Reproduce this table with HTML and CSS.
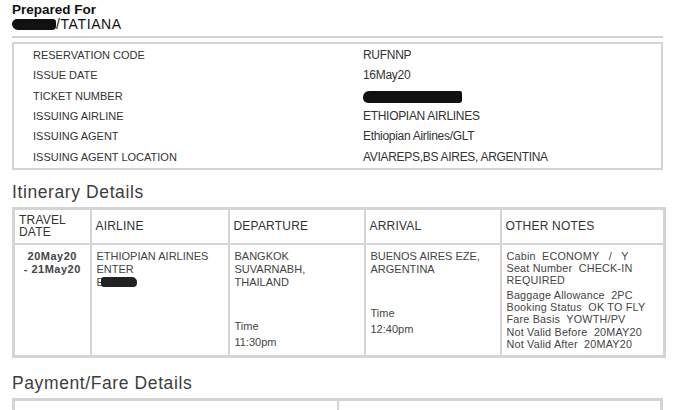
FILE: index.html
```html
<!DOCTYPE html>
<html>
<head>
<meta charset="utf-8">
<link rel="stylesheet" href="styles.css">
</head>
<body>
<div class="page">
  <div class="prepared">
    <div class="prep-title">Prepared For</div>
    <div class="prep-name"><span class="redact redact-name"></span>/TATIANA</div>
  </div>
  <div class="rule"></div>

  <div class="info">
    <div class="info-row"><span class="info-label">RESERVATION CODE</span><span class="info-value">RUFNNP</span></div>
    <div class="info-row"><span class="info-label">ISSUE DATE</span><span class="info-value">16May20</span></div>
    <div class="info-row"><span class="info-label">TICKET NUMBER</span><span class="info-value"><span class="redact redact-ticket"></span></span></div>
    <div class="info-row"><span class="info-label">ISSUING AIRLINE</span><span class="info-value">ETHIOPIAN AIRLINES</span></div>
    <div class="info-row"><span class="info-label">ISSUING AGENT</span><span class="info-value">Ethiopian Airlines/GLT</span></div>
    <div class="info-row"><span class="info-label">ISSUING AGENT LOCATION</span><span class="info-value">AVIAREPS,BS AIRES, ARGENTINA</span></div>
  </div>

  <h2 class="section">Itinerary Details</h2>
  <table class="itin">
    <colgroup>
      <col class="c1"><col class="c2"><col class="c3"><col class="c4"><col class="c5">
    </colgroup>
    <thead>
      <tr>
        <th>TRAVEL<br>DATE</th>
        <th>AIRLINE</th>
        <th>DEPARTURE</th>
        <th>ARRIVAL</th>
        <th>OTHER NOTES</th>
      </tr>
    </thead>
    <tbody>
      <tr>
        <td class="date">20May20<br>- 21May20</td>
        <td>ETHIOPIAN AIRLINES<br>ENTER<br><span class="e-red">E<span class="redact redact-air"></span></span></td>
        <td>BANGKOK<br>SUVARNABH,<br>THAILAND<div class="time-lbl">Time</div><div class="time-val">11:30pm</div></td>
        <td>BUENOS AIRES EZE,<br>ARGENTINA<div class="time-lbl">Time</div><div class="time-val">12:40pm</div></td>
        <td class="notes"><div>Cabin  ECONOMY   /   Y</div><div>Seat Number  CHECK-IN REQUIRED</div><div class="gap">Baggage Allowance  2PC</div><div>Booking Status  OK TO FLY</div><div>Fare Basis  YOWTH/PV</div><div>Not Valid Before  20MAY20</div><div>Not Valid After  20MAY20</div></td>
      </tr>
    </tbody>
  </table>

  <h2 class="section pay">Payment/Fare Details</h2>
  <table class="pay-table">
    <tr><td></td><td></td></tr>
  </table>
</div>
</body>
</html>
```

FILE: styles.css
```css
html, body {
  margin: 0;
  padding: 0;
  background: #ffffff;
}

body {
  font-family: "Liberation Sans", Arial, sans-serif;
  color: #333333;
}

.page {
  width: 651px;
  margin-left: 12px;
  padding-top: 2px;
}

.prep-title {
  font-weight: bold;
  font-size: 13.5px;
  line-height: 15px;
  color: #111111;
}

.prep-name {
  font-size: 14px;
  line-height: 15px;
  color: #111111;
  letter-spacing: 0.6px;
  display: flex;
  align-items: center;
}

.redact {
  display: inline-block;
  background: #111111;
  filter: blur(0.7px);
}

.redact-name {
  width: 44px;
  height: 11px;
  border-radius: 5px 3px 4px 6px;
}

.rule {
  margin-top: 4px;
  height: 2px;
  background: #d2d2d2;
}

.info {
  margin-top: 4px;
  border: 2px solid #d4d4d4;
  padding: 1px 0 1px 0;
}

.info-row {
  display: flex;
  height: 20.3px;
  align-items: center;
}

.info-label {
  width: 330px;
  padding-left: 19px;
  font-size: 11px;
  color: #333333;
}

.info-value {
  font-size: 12px;
  letter-spacing: -0.3px;
  color: #333333;
}

.redact-ticket {
  width: 99px;
  height: 12px;
  border-radius: 6px 2px 3px 5px;
  vertical-align: middle;
}

.section {
  margin: 12px 0 5px 0;
  font-size: 17.5px;
  font-weight: normal;
  letter-spacing: 0.6px;
  line-height: 20px;
  color: #3d3d3d;
}

.itin {
  width: 651px;
  border-collapse: collapse;
  table-layout: fixed;
  border: 3px solid #d4d4d4;
}

.c1 { width: 77px; }
.c2 { width: 138px; }
.c3 { width: 136px; }
.c4 { width: 136px; }
.c5 { width: 164px; }

.itin th {
  border: 2px solid #d4d4d4;
  text-align: left;
  font-weight: normal;
  font-size: 12px;
  line-height: 12.5px;
  letter-spacing: 0.2px;
  color: #333333;
  padding: 4px 4px 4px 4px;
  height: 25px;
}

.itin td {
  border: 2px solid #d4d4d4;
  vertical-align: top;
  font-size: 11px;
  line-height: 13px;
  color: #444444;
  padding: 5px 5px 5px 5px;
}

.itin td.date {
  text-align: center;
  font-weight: bold;
  letter-spacing: 0.5px;
  padding-left: 2px;
  padding-right: 2px;
}

.e-red {
  display: inline-flex;
  align-items: center;
}

.redact-air {
  width: 36px;
  height: 10px;
  margin-left: -3px;
  border-radius: 3px 5px 4px 3px;
  background: #222222;
}

.time-lbl {
  margin-top: 29px;
  line-height: 16px;
}

.time-val {
  line-height: 16px;
}

.itin td.notes {
  font-size: 10.8px;
  line-height: 12.3px;
  letter-spacing: 0.2px;
  padding-bottom: 3px;
}

.notes div {
  white-space: pre-wrap;
}

.notes .gap {
  margin-top: 2px;
}

.section.pay {
  margin-top: 15px;
  margin-bottom: 5px;
}

.pay-table {
  width: 651px;
  border-collapse: collapse;
  table-layout: fixed;
  border: 3px solid #d4d4d4;
}

.pay-table td {
  border: 2px solid #d4d4d4;
  height: 30px;
}
```
